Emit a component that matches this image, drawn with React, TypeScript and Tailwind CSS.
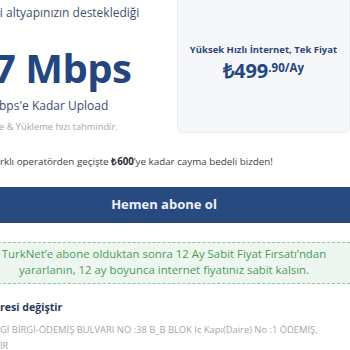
import type { ReactNode } from 'react';

// a line whose start is pushed off the left edge; `box` sets where the visible part begins
const Cut = ({
  hide,
  box,
  className = '',
  children,
}: {
  hide: string;
  box: string;
  className?: string;
  children: ReactNode;
}) => (
  <div className={`flex whitespace-nowrap ${className}`}>
    <div className={`flex shrink-0 justify-end ${box}`}>
      <span className="shrink-0">{hide}</span>
    </div>
    <span className="shrink-0">{children}</span>
  </div>
);

export default function App() {
  return (
    <div className="w-[350px] h-[350px] overflow-hidden bg-white font-['Open_Sans',sans-serif]">
      <div className="-ml-[22px] w-[372px]">
        <div className="flex">
          <div className="w-[199px] shrink-0">
            <Cut
              hide={'Adresinizdeki\u00a0'}
              box="w-[28px]"
              className="mt-[4px] text-[12px] leading-[18px] text-[#40506f]"
            >
              altyapınızın desteklediği
            </Cut>
            <Cut
              hide="1"
              box="w-[15px]"
              className="mt-[24px] text-[40px] leading-[44px] font-bold tracking-[-0.5px] text-[#24467f]"
            >
              7 Mbps
            </Cut>
            <Cut
              hide="1 M"
              box="w-[21px]"
              className="mt-[6px] text-[12px] leading-[20px] text-[#3d4b6c]"
            >
              bps'e Kadar Upload
            </Cut>
            <Cut
              hide="İndirm"
              box="w-[21px]"
              className="mt-[4px] text-[9.3px] leading-[14px] text-[#a4a7ae]"
            >
              e & Yükleme hızı tahmindir.
            </Cut>
          </div>
          <div className="flex-1 h-[143px] -mt-[10px] rounded-md border border-[#e7ebf2] bg-[#f5f7fb] pt-[52px] flex flex-col items-center">
            <div className="text-[9.5px] leading-[14px] font-bold text-[#2c4574] whitespace-nowrap">
              Yüksek Hızlı İnternet, Tek Fiyat
            </div>
            <div className="mt-[2px] flex items-start font-bold text-[#23467f]">
              <span className="text-[20px] leading-[24px]">₺499</span>
              <span className="mt-[2px] text-[11.5px] leading-[14px]">.90/Ay</span>
            </div>
          </div>
        </div>

        <Cut
          hide="Fa"
          box="w-[22px]"
          className="mt-[20px] text-[9.8px] leading-[16px] text-[#3a3f4a]"
        >
          rklı operatörden geçişte <b className="text-[#2a2e38]">₺600</b>’ye kadar cayma bedeli bizden!
        </Cut>

        <button className="mt-[17px] w-full h-[36px] bg-[#284a80] text-[13px] font-bold text-[#eef3fa]">
          Hemen abone ol
        </button>

        <div className="mt-[19px] border-y border-dashed border-[#93c49e] bg-[#eef7ef] pt-[3px] pb-[5px] text-center text-[11.4px] leading-[16px] text-[#4b9a5c]">
          <p className="whitespace-nowrap">TurkNet’e abone olduktan sonra 12 Ay Sabit Fiyat Fırsatı’ndan</p>
          <p>yararlanın, 12 ay boyunca internet fiyatınız sabit kalsın.</p>
        </div>

        <Cut
          hide="Ad"
          box="w-[22px]"
          className="mt-[15px] text-[10.6px] leading-[16px] font-bold text-[#2a3b5e]"
        >
          resi değiştir
        </Cut>
        <div className="mt-[7px] text-[9.4px] leading-[16px] text-[#a3a6ad]">
          <Cut hide="BİR" box="w-[22px]">
            Gİ BİRGİ-ÖDEMİŞ BULVARI NO :38 B_B BLOK Ic Kapı(Daire) No :1 ÖDEMİŞ,
          </Cut>
          <Cut hide="İZM" box="w-[22px]">
            İR
          </Cut>
        </div>
      </div>
    </div>
  );
}
